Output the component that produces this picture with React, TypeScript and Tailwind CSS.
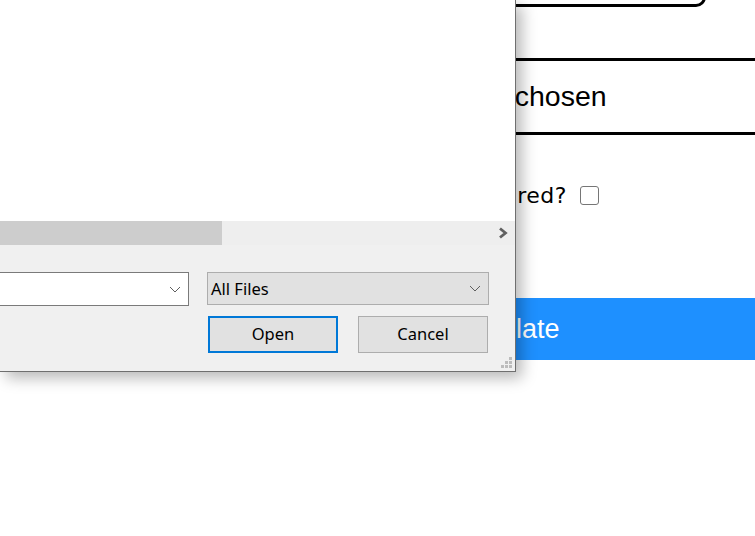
import React from "react";

function Chevron({ className = "" }: { className?: string }) {
  return (
    <svg width="12" height="7" viewBox="0 0 12 7" className={className}>
      <polyline points="1,1 6,6 11,1" fill="none" stroke="#5f5f5f" strokeWidth="1" />
    </svg>
  );
}

function FileDialog() {
  return (
    <div className="absolute left-0 top-0 w-[516px] h-[372px] flex flex-col bg-white border-r border-b border-[#6f6f6f] shadow-[6px_6px_14px_rgba(0,0,0,0.28)] font-['Noto_Sans',sans-serif] text-black">
      {/* file list area */}
      <div className="h-[221px] bg-white" />

      {/* horizontal scrollbar */}
      <div className="h-[24px] flex items-stretch bg-[#eeeeee]">
        <div className="w-[222px] bg-[#cdcdcd]" />
        <div className="flex-1" />
        <div className="w-[25px] flex items-center justify-center">
          <svg width="10" height="12" viewBox="0 0 10 12">
            <polyline points="2,1.5 7.5,6 2,10.5" fill="none" stroke="#606060" strokeWidth="2.8" />
          </svg>
        </div>
      </div>

      {/* bottom panel */}
      <div className="relative flex-1 bg-[#f0f0f0] pt-[27px]">
        <div className="flex items-start">
          <div className="w-[189px] h-[34px] bg-white border-y border-r border-[#7a7a7a] flex items-center justify-end pr-[7px]">
            <Chevron />
          </div>
          <div className="ml-[18px] w-[282px] h-[33px] bg-[#e1e1e1] border border-[#adadad] flex items-center justify-between pl-[3px] pr-[7px] text-[16.5px]">
            <span className="pt-[1px]">All Files</span>
            <Chevron />
          </div>
        </div>
        <div className="flex mt-[10px] ml-[208px] gap-[20px] text-[16.5px]">
          <button className="w-[130px] h-[37px] bg-[#e1e1e1] border-2 border-[#0078d7] flex items-center justify-center">
            Open
          </button>
          <button className="w-[130px] h-[37px] bg-[#e1e1e1] border border-[#adadad] flex items-center justify-center">
            Cancel
          </button>
        </div>
        {/* resize grip */}
        <svg width="12" height="12" viewBox="0 0 12 12" className="absolute right-[2px] bottom-[2px]">
          <g fill="#bcbcbc">
            <rect x="8" y="0" width="3" height="3" />
            <rect x="4" y="4" width="3" height="3" />
            <rect x="8" y="4" width="3" height="3" />
            <rect x="0" y="8" width="3" height="3" />
            <rect x="4" y="8" width="3" height="3" />
            <rect x="8" y="8" width="3" height="3" />
          </g>
        </svg>
      </div>
    </div>
  );
}

export default function App() {
  return (
    <div className="relative w-[755px] h-[536px] overflow-hidden bg-white">
      {/* page form behind the dialog */}
      <div className="flex flex-col font-['Liberation_Sans',Arial,sans-serif] text-black">
        <div className="-mt-[40px] ml-[290px] w-[416px] h-[47px] border-[3px] border-black rounded-[10px]" />

        <div className="mt-[51px] h-[77px] border-y-[3px] border-black flex items-center pl-[426px] text-[28.5px] leading-none">
          No file chosen
        </div>

        <div className="mt-[48px] h-[24px] flex items-center font-['DejaVu_Sans',sans-serif] text-[22px] tracking-[0.5px]">
          <span className="w-[567px] text-right">Is it required?</span>
          <span className="ml-[13px] w-[19px] h-[19px] rounded-[3px] border-[1.5px] border-[#767676] bg-white" />
        </div>

        <div className="mt-[91px] h-[62px] bg-[#1e90ff] flex items-center pl-[447px] text-[27px] text-white">
          Calculate
        </div>
      </div>

      <FileDialog />
    </div>
  );
}
